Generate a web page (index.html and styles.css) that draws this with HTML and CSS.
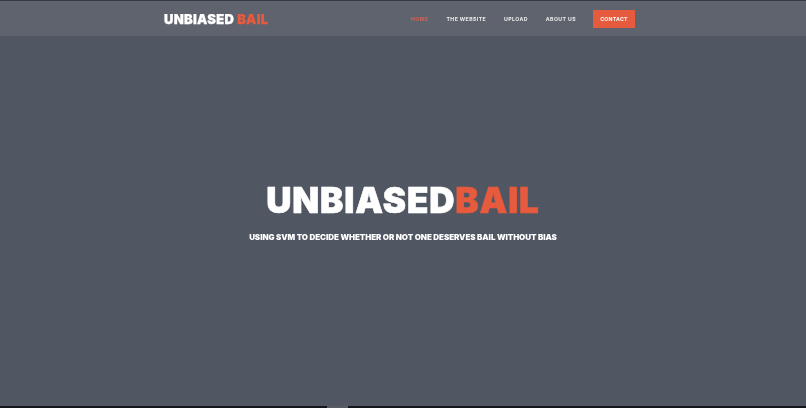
FILE: index.html
```html
<!DOCTYPE html>
<html lang="en">
<head>
<meta charset="utf-8">
<title>UnbiasedBail</title>
<link rel="stylesheet" href="styles.css">
</head>
<body>
<div class="page">
  <header class="topbar">
    <a class="logo" href="#">UNBIASED <span class="accent">BAIL</span></a>
    <nav class="menu">
      <a class="link active" href="#">HOME</a>
      <a class="link" href="#">THE WEBSITE</a>
      <a class="link" href="#">UPLOAD</a>
      <a class="link" href="#">ABOUT US</a>
      <a class="contact" href="#">CONTACT</a>
    </nav>
  </header>
  <main class="hero">
    <h1 class="title">UNBIASED<span class="accent">BAIL</span></h1>
    <p class="tagline">USING SVM TO DECIDE WHETHER OR NOT ONE DESERVES BAIL WITHOUT BIAS</p>
  </main>
  <footer class="edge"><span class="tab"></span></footer>
</div>
</body>
</html>
```
FILE: styles.css
```css
* { box-sizing: border-box; }
html, body { margin: 0; height: 100%; overflow: hidden; }
body { background: #515663; font-family: Inter, "Liberation Sans", sans-serif; color: #fff; }
a { color: inherit; text-decoration: none; }
.page { width: 806px; height: 408px; display: flex; flex-direction: column; filter: blur(0.45px); }
.topbar {
  flex: none; height: 36px; padding: 0 171px 0 164px;
  display: flex; align-items: center; justify-content: space-between;
  background: #5f636e; border-top: 1px solid #363a45;
}
.logo { font-size: 13px; font-weight: 900; letter-spacing: 0.3px; white-space: nowrap; -webkit-text-stroke: 0.25px currentColor; }
.accent { color: #e65a3d; }
.menu { display: flex; align-items: center; gap: 18px; }
.link { font-size: 5.2px; font-weight: 700; letter-spacing: 0.4px; color: #eceded; white-space: nowrap; }
.link.active { color: #d9604b; }
.contact {
  width: 42px; height: 18px; margin-left: -1px; display: flex; align-items: center; justify-content: center;
  background: #e65a3d; color: #fff; font-size: 5.2px; font-weight: 700; letter-spacing: 0.25px;
}
.hero { flex: 1; padding-top: 144px; display: flex; flex-direction: column; align-items: center; background: #515663; }
.title { margin: 0; font-size: 35px; line-height: 40px; font-weight: 900; letter-spacing: 0.8px; white-space: nowrap; -webkit-text-stroke: 0.6px currentColor; }
.tagline { margin: 12px 0 0; font-size: 8px; line-height: 11px; font-weight: 900; letter-spacing: -0.06px; white-space: nowrap; }
.edge { flex: none; height: 2px; background: #15161a; display: flex; padding-left: 327px; }
.tab { width: 21px; height: 2px; background: #585c66; }
```
